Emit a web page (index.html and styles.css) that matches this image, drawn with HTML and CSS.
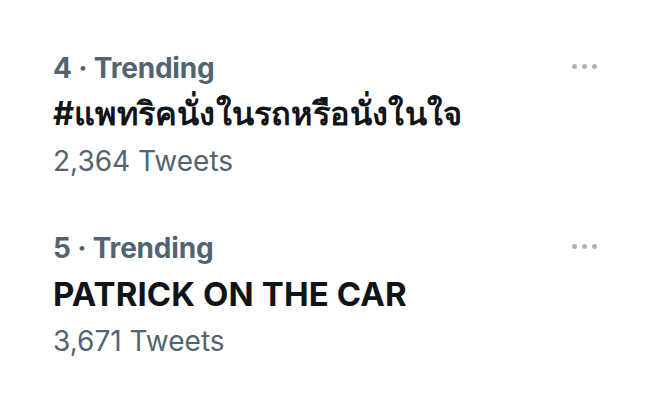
FILE: index.html
```html
<!DOCTYPE html>
<html lang="th">
<head>
<meta charset="utf-8">
<link rel="stylesheet" href="styles.css">
</head>
<body>
<main class="list">
  <section class="trend">
    <div class="meta-row">
      <span class="meta">4 · Trending</span>
      <span class="more" aria-label="More"><i></i><i></i><i></i></span>
    </div>
    <div class="title thai">#แพทริคนั่งในรถหรือนั่งในใจ</div>
    <div class="count">2,364 Tweets</div>
  </section>
  <section class="trend">
    <div class="meta-row">
      <span class="meta">5 · Trending</span>
      <span class="more" aria-label="More"><i></i><i></i><i></i></span>
    </div>
    <div class="title">PATRICK ON THE CAR</div>
    <div class="count">3,671 Tweets</div>
  </section>
</main>
</body>
</html>
```

FILE: styles.css
```css
html, body {
  margin: 0;
  padding: 0;
  background: #ffffff;
}
body {
  font-family: Inter, "Liberation Sans", "Noto Sans", sans-serif;
  -webkit-font-smoothing: antialiased;
}
.list {
  display: flex;
  flex-direction: column;
  gap: 41px;
  padding: 45px 54px 0 53px;
}
.trend {
  display: flex;
  flex-direction: column;
}
.meta-row {
  display: flex;
  align-items: center;
  justify-content: space-between;
  height: 45px;
}
.meta {
  font-size: 28px;
  font-weight: 700;
  color: #536471;
  letter-spacing: -0.2px;
}
.more {
  display: flex;
  gap: 5px;
  margin-right: 5px;
  margin-top: -2px;
}
.more i {
  display: block;
  width: 5px;
  height: 5px;
  border-radius: 50%;
  background: #aab3bb;
}
.title {
  height: 48px;
  line-height: 48px;
  font-size: 33px;
  font-weight: 700;
  color: #0f1419;
  white-space: nowrap;
  letter-spacing: 0.1px;
}
.title.thai {
  font-size: 32.5px;
  letter-spacing: 0.2px;
}
.count {
  height: 46px;
  line-height: 46px;
  font-size: 28px;
  font-weight: 400;
  color: #536471;
}
```
